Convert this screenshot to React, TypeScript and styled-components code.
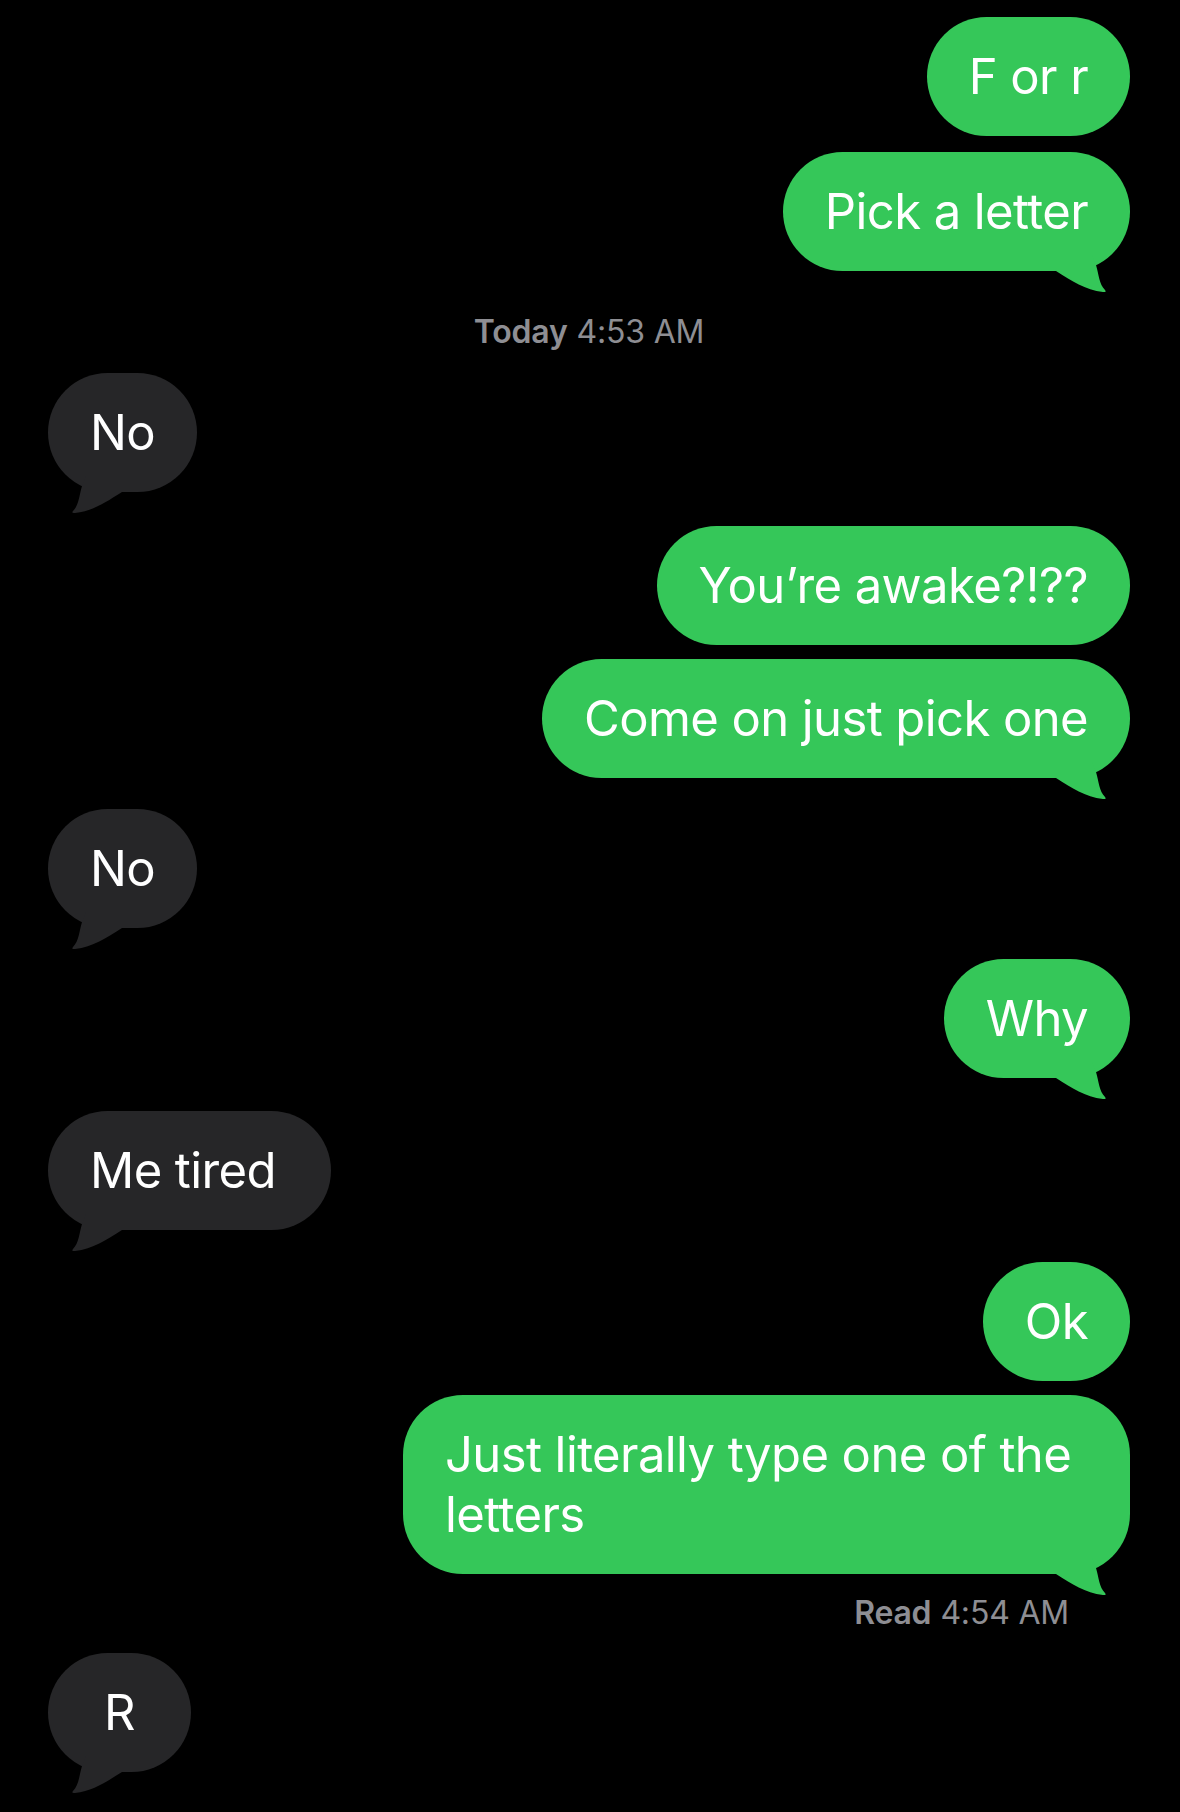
import styled, { createGlobalStyle } from "styled-components";

const GlobalStyle = createGlobalStyle`
    html, body {
        margin: 0;
        padding: 0;
        background: #000000;
    }
    body {
        font-family: Inter, "Noto Sans", "Liberation Sans", sans-serif;
        -webkit-font-smoothing: antialiased;
    }
`;

type Side = "sent" | "received";

interface Message {
    kind: "bubble" | "stamp";
    side?: Side;
    text?: string;
    bold?: string;
    time?: string;
    tail?: boolean;
    top: number;
}

const messages: Message[] = [
    { kind: "bubble", side: "sent", text: "F or r", top: 17 },
    { kind: "bubble", side: "sent", text: "Pick a letter", tail: true, top: 16 },
    { kind: "stamp", bold: "Today", time: "4:53 AM", top: 41 },
    { kind: "bubble", side: "received", text: "No", tail: true, top: 21 },
    { kind: "bubble", side: "sent", text: "You\u2019re awake?!??", top: 34 },
    { kind: "bubble", side: "sent", text: "Come on just pick one", tail: true, top: 14 },
    { kind: "bubble", side: "received", text: "No", tail: true, top: 31 },
    { kind: "bubble", side: "sent", text: "Why", tail: true, top: 31 },
    { kind: "bubble", side: "received", text: "Me tired\u00a0", tail: true, top: 33 },
    { kind: "bubble", side: "sent", text: "Ok", top: 32 },
    { kind: "bubble", side: "sent", text: "Just literally type one of the letters", tail: true, top: 14 },
    { kind: "stamp", side: "sent", bold: "Read", time: "4:54 AM", top: 19 },
    { kind: "bubble", side: "received", text: "R", tail: true, top: 20 },
];

const Screen = styled.div`
    width: 1180px;
    height: 1812px;
    box-sizing: border-box;
    padding: 0 50px 0 48px;
    display: flex;
    flex-direction: column;
    overflow: hidden;
`;

const Row = styled.div<{ $side: Side; $top: number }>`
    display: flex;
    justify-content: ${props => props.$side === "sent" ? "flex-end" : "flex-start"};
    margin-top: ${props => props.$top}px;
`;

const Bubble = styled.div<{ $side: Side }>`
    position: relative;
    min-width: 143px;
    max-width: 727px;
    box-sizing: border-box;
    padding: 30px 42px 29px 42px;
    border-radius: 60px;
    background-color: ${props => props.$side === "sent" ? "#35c759" : "#262628"};
    color: #ffffff;
    font-size: 49px;
    line-height: 60px;
    letter-spacing: -0.6px;
    font-weight: 400;
    text-align: ${props => props.$side === "received" ? "center" : "left"};
`;

const BubbleText = styled.span`
    position: relative;
    z-index: 1;
`;

const Tail = styled.svg<{ $side: Side }>`
    position: absolute;
    bottom: -25px;
    width: 80px;
    height: 45px;
    ${props => props.$side === "sent" ? "right: 0;" : "left: 0; transform: scaleX(-1);"}
`;

const Stamp = styled.div<{ $side: Side; $top: number }>`
    margin-top: ${props => props.$top}px;
    text-align: ${props => props.$side === "sent" ? "right" : "center"};
    padding-right: ${props => props.$side === "sent" ? "61px" : "0"};
    color: #8e8e93;
    font-size: 32px;
    line-height: 40px;
    letter-spacing: -0.2px;
`;

const StampBold = styled.span`
    font-weight: 600;
    margin-right: 9px;
`;

function BubbleTail({ side, color }: { side: Side; color: string }) {
    return (
        <Tail $side={side} viewBox="-80 -20 80 45">
            <path
                fill={color}
                d="M -74 -16 L -38 -16 L -34 -6 C -31 4 -31 13 -25 19 Q -23 21.5 -27 21 C -45 19 -58 10 -74 0 Z" />
        </Tail>
    );
}

export default function App() {
    return (
        <>
            <GlobalStyle />
            <Screen>
                {messages.map((m, i) => {
                    if (m.kind === "stamp") {
                        return (
                            <Stamp key={i} $side={m.side ?? "received"} $top={m.top}>
                                <StampBold>{m.bold}</StampBold>{m.time}
                            </Stamp>
                        );
                    }
                    const side = m.side ?? "sent";
                    return (
                        <Row key={i} $side={side} $top={m.top}>
                            <Bubble $side={side}>
                                <BubbleText>{m.text}</BubbleText>
                                {m.tail && (
                                    <BubbleTail side={side} color={side === "sent" ? "#35c759" : "#262628"} />
                                )}
                            </Bubble>
                        </Row>
                    );
                })}
            </Screen>
        </>
    );
}
